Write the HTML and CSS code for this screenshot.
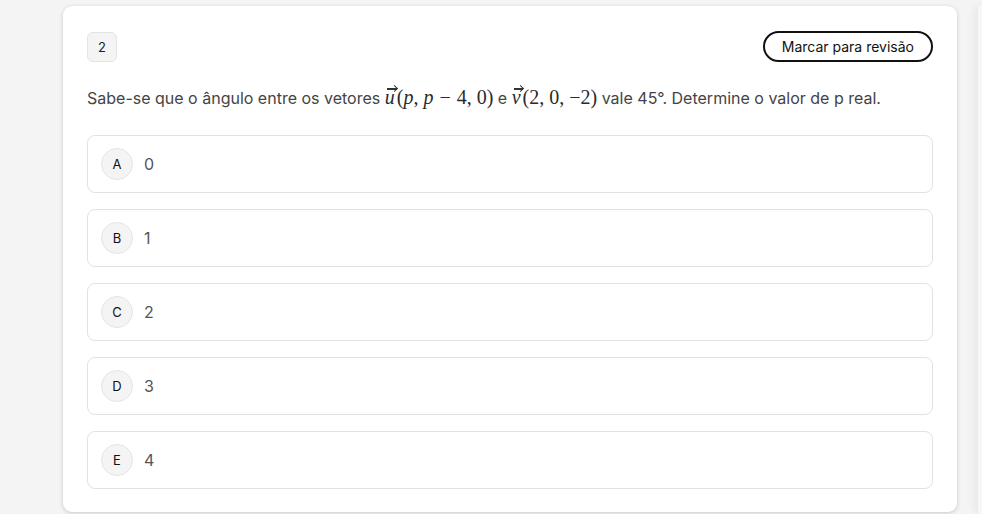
FILE: index.html
```html
<!DOCTYPE html>
<html lang="pt">
<head>
<meta charset="utf-8">
<link rel="stylesheet" href="styles.css">
</head>
<body>
<div class="page">
  <main class="card">
    <div class="head">
      <div class="num">2</div>
      <button class="mark">Marcar para revisão</button>
    </div>
    <p class="question">Sabe-se que o ângulo entre os vetores <span class="math"><span class="vec">u</span>(<i>p</i>,<span class="sp"></span><i>p</i><span class="op">−</span>4,<span class="sp"></span>0)</span> e <span class="math"><span class="vec">v</span>(2,<span class="sp"></span>0,<span class="sp"></span>−2)</span> vale 45°. Determine o valor de p real.</p>
    <ul class="options">
      <li class="opt"><span class="letter">A</span><span class="val">0</span></li>
      <li class="opt"><span class="letter">B</span><span class="val">1</span></li>
      <li class="opt"><span class="letter">C</span><span class="val">2</span></li>
      <li class="opt"><span class="letter">D</span><span class="val">3</span></li>
      <li class="opt"><span class="letter">E</span><span class="val">4</span></li>
    </ul>
  </main>
  <aside class="side"></aside>
</div>
</body>
</html>
```
FILE: styles.css
```css
html, body { margin: 0; padding: 0; }
body {
  background: #f4f4f4;
  font-family: Inter, "Noto Sans", sans-serif;
  overflow: hidden;
  height: 514px;
}
.page {
  display: flex;
  gap: 21px;
  padding: 6px 0 0 63px;
  height: 514px;
  box-sizing: border-box;
  overflow: hidden;
}
.card {
  flex: 0 0 894px;
  box-sizing: border-box;
  height: 506px;
  background: #fff;
  border-radius: 9px;
  box-shadow: 0 1px 4px rgba(0,0,0,0.18);
  padding: 24px 24px 24px 24px;
}
.head {
  display: flex;
  justify-content: space-between;
  align-items: center;
}
.num {
  width: 30px;
  height: 30px;
  box-sizing: border-box;
  border: 1px solid #e3e3e3;
  background: #f4f4f4;
  border-radius: 6px;
  display: flex;
  align-items: center;
  justify-content: center;
  font-size: 13px;
  color: #222;
  margin-top: 1px;
}
.mark {
  font-family: Inter, sans-serif;
  font-size: 14px;
  color: #111;
  background: #fff;
  border: 2px solid #111;
  border-radius: 16px;
  height: 31px;
  padding: 0 17px;
  margin-top: 1px;
}
.question {
  margin: 22px 0 0 0;
  font-size: 16px;
  color: #444;
  line-height: 26px;
}
.math {
  font-family: "Liberation Serif", "DejaVu Serif", serif;
  font-size: 20px;
  color: #2a2a2a;
  word-spacing: 1px;
}
.math i { font-style: italic; }
.sp { display: inline-block; width: 5px; }
.op { padding: 0 6px; }
.vec {
  position: relative;
  font-style: italic;
  display: inline-block;
  padding-right: 2px;
}
.vec::before {
  content: "";
  position: absolute;
  left: 2px;
  right: 0px;
  top: 4px;
  height: 1.5px;
  background: #333;
}
.vec::after {
  content: "";
  position: absolute;
  right: 0px;
  top: 2px;
  width: 5px;
  height: 5px;
  border-top: 1.5px solid #333;
  border-right: 1.5px solid #333;
  transform: rotate(45deg);
  box-sizing: border-box;
}
.options {
  list-style: none;
  margin: 24px 0 0 0;
  padding: 0;
  display: flex;
  flex-direction: column;
  gap: 16px;
}
.opt {
  height: 58px;
  box-sizing: border-box;
  border: 1px solid #e2e2e2;
  border-radius: 8px;
  display: flex;
  align-items: center;
  padding-left: 13px;
  gap: 11px;
}
.letter {
  width: 32px;
  height: 32px;
  box-sizing: border-box;
  border-radius: 50%;
  border: 1px solid #e5e5e5;
  background: #f4f4f4;
  display: flex;
  align-items: center;
  justify-content: center;
  font-size: 13px;
  color: #111;
}
.val {
  font-size: 16px;
  color: #555;
}
.side {
  flex: 1 1 auto;
  min-width: 0;
  height: 508px;
  background: #f7f7f7;
  box-shadow: -2px 0 8px rgba(0,0,0,0.10);
  border-radius: 8px 0 0 8px;
}
```
